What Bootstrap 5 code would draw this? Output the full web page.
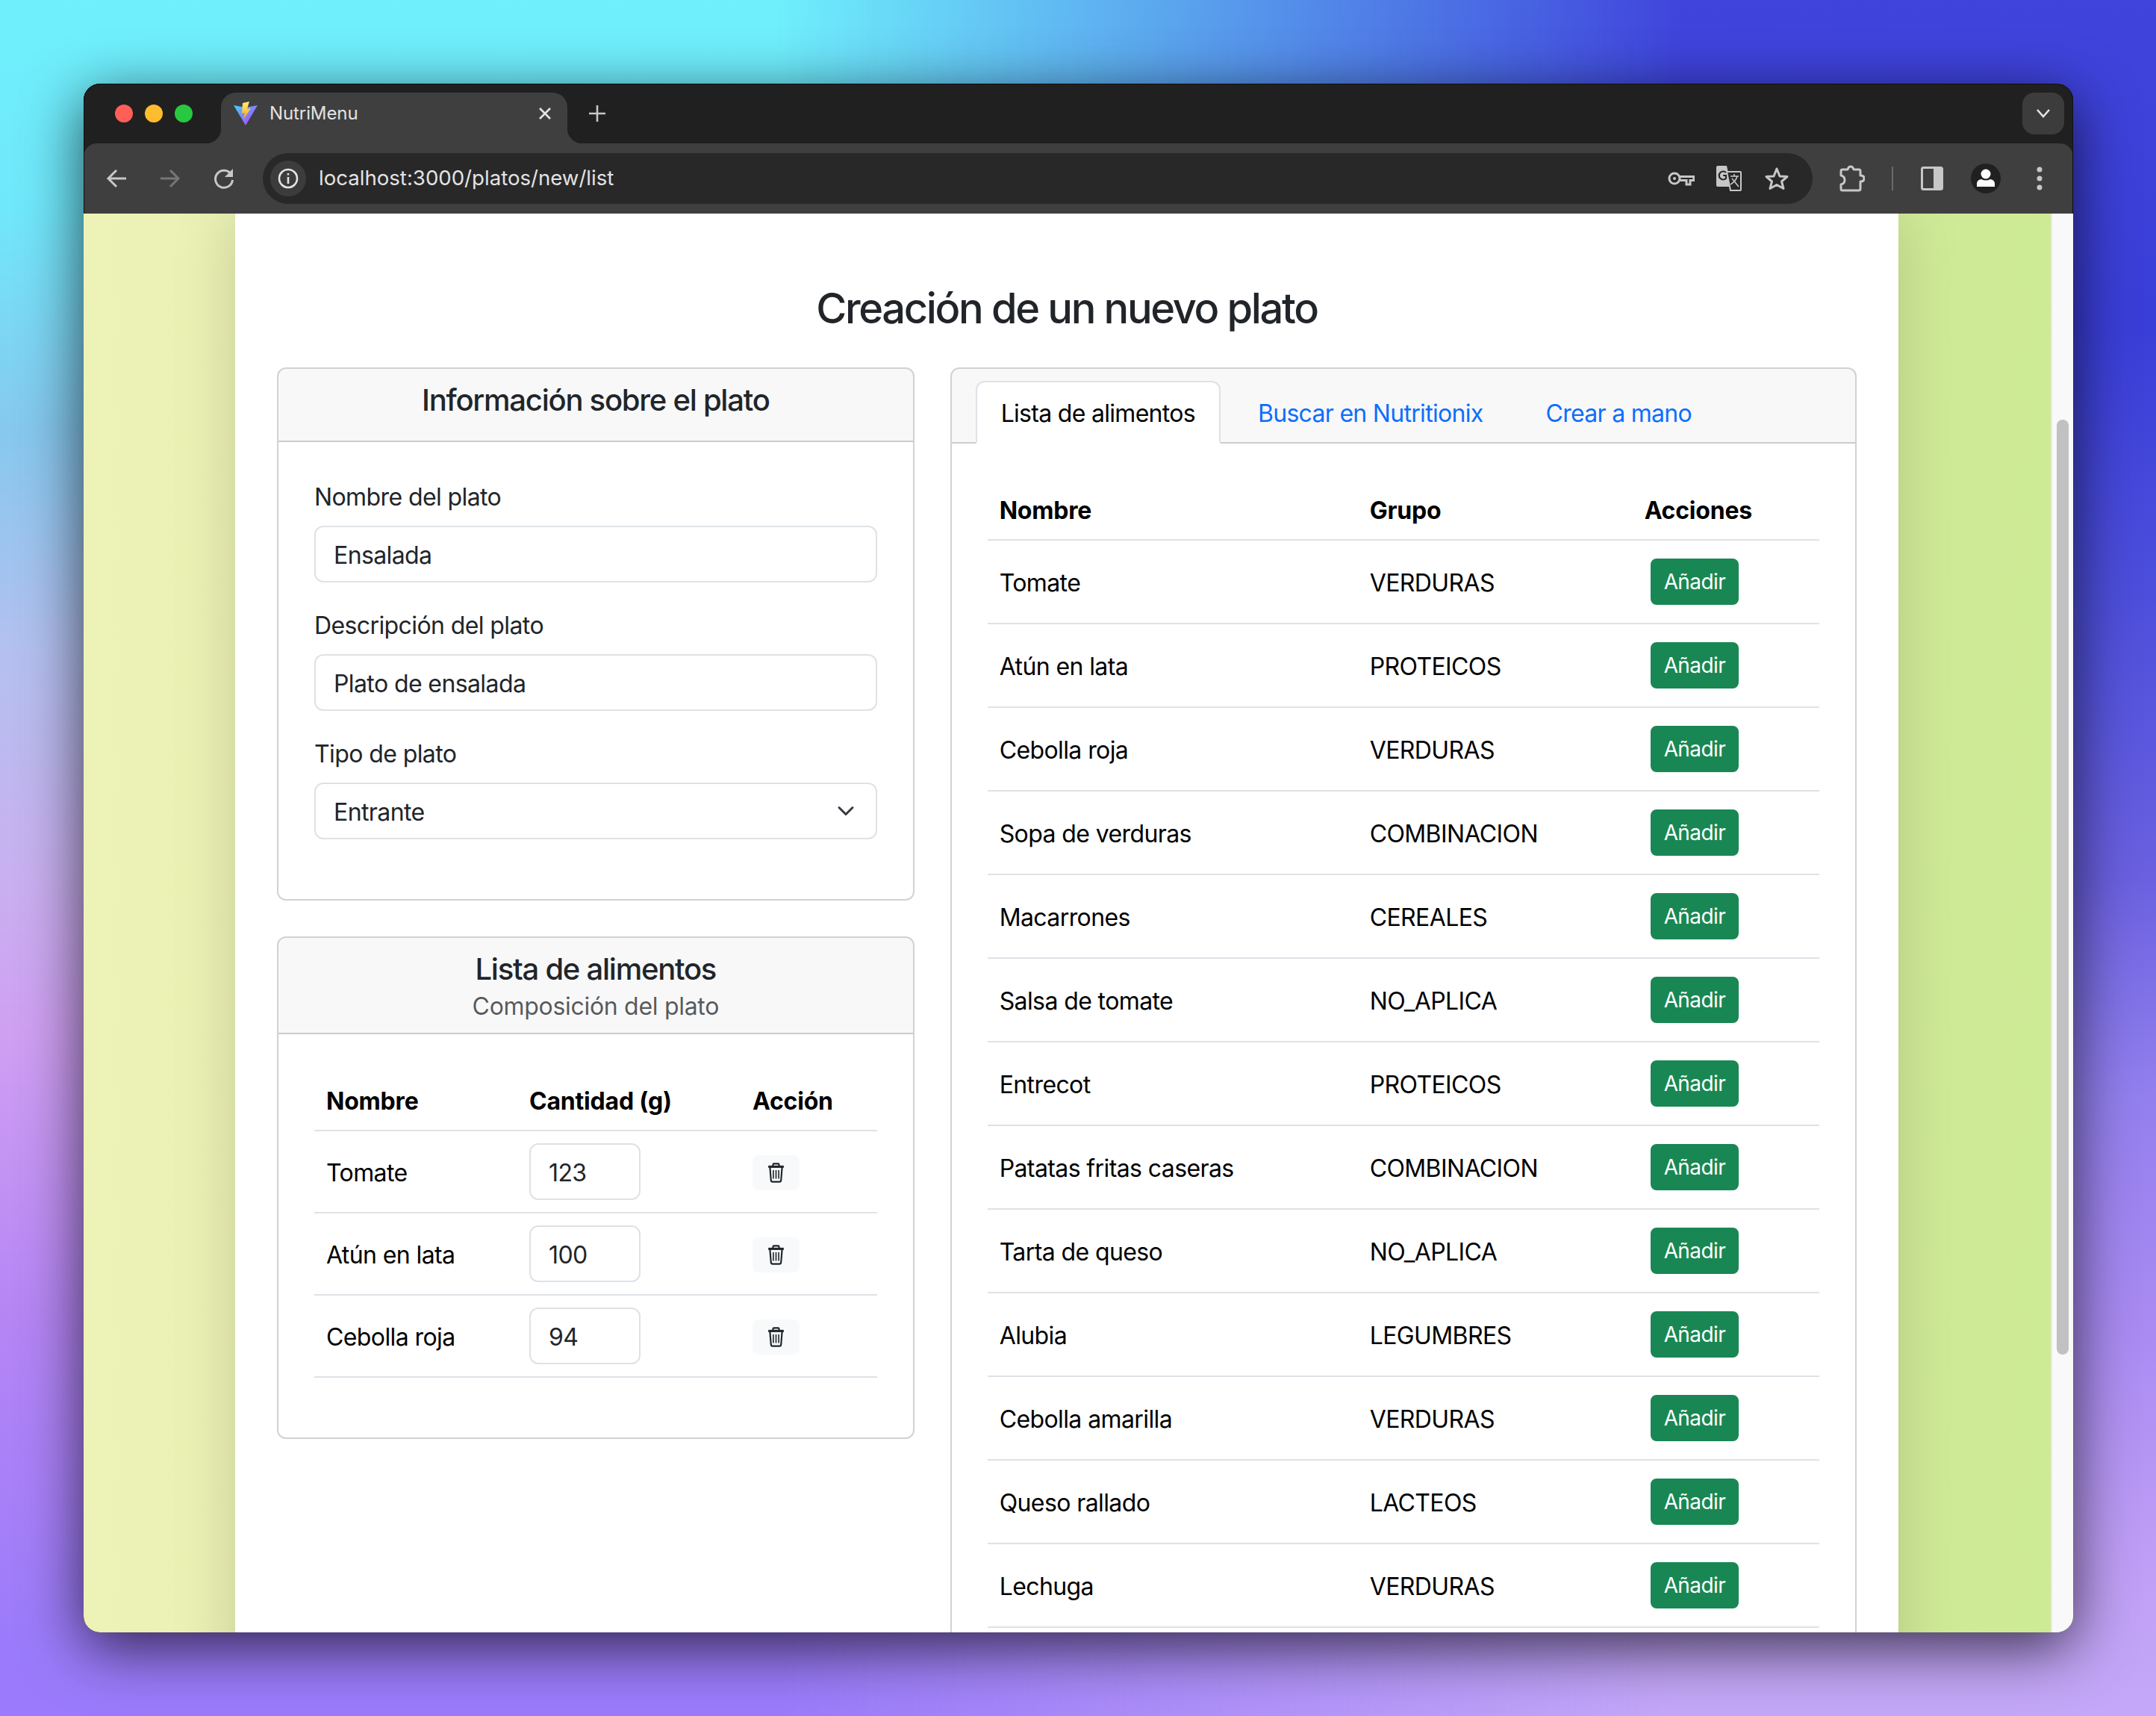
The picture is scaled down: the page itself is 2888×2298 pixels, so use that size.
<!DOCTYPE html>
<html lang="es">
<head>
    <meta charset="UTF-8" />
    <meta name="viewport" content="width=device-width, initial-scale=1.0" />
    <title>NutriMenu</title>
    <link href="https://cdn.jsdelivr.net/npm/bootstrap@5.3.0/dist/css/bootstrap.min.css" rel="stylesheet">
    <style>
        /* the shot is 2x, so double the rem and the hairlines */
        html { font-size: 32px; }
        :root {
            --bs-border-width: 2px;
            --bs-body-font-family: Inter, "Liberation Sans", sans-serif;
        }
        body {
            width: 2888px;
            height: 2298px;
            overflow: hidden;
            padding: 112px 0 0 112px;
            letter-spacing: -.6px;
            background: linear-gradient(180deg, #6ff0fc 0, #70e8fb 12%, #86c8ee 25%, #b4c0f0 38%, #c9b0f0 51%, #cfa0f2 60%, #b585f5 77%, #9b7bfb 96%);
        }
        /* right half of the wallpaper, faded in over the left half */
        body::before {
            content: "";
            position: absolute;
            inset: 0;
            z-index: -1;
            background: linear-gradient(180deg, #4044dc 0, #3a3ed8 19%, #4d4fdc 35%, #6a60e0 51%, #9380ee 64%, #a98af2 77%, #c0a0f6 92%, #c4a8f8 100%);
            -webkit-mask-image: linear-gradient(90deg, transparent 36%, #000 78%);
            mask-image: linear-gradient(90deg, transparent 36%, #000 78%);
        }
        .browser-win {
            width: 2665px;
            height: 2074px;
            border-radius: 22px;
            overflow: hidden;
            background: #202020;
            outline: 1px solid #111;
            outline-offset: -1px;
            box-shadow: 0 20px 80px rgba(0,0,0,.7);
            letter-spacing: 0;
        }
        .tab-strip { height: 80px; padding-top: 11px; background: #202020; border-top: 1px solid #666; }
        .win-dots { width: 184px; padding-left: 42px; padding-bottom: 12px; gap: 16px; }
        .win-dot { width: 24px; height: 24px; border-radius: 50%; }
        .tab-item {
            position: relative;
            width: 464px;
            height: 68px;
            padding: 0 20px 12px 17px;
            background: #3f3f3f;
            border-radius: 20px 20px 0 0;
            color: #e3e3e3;
            font-size: 24px;
            letter-spacing: -.1px;
        }
        .tab-item::before, .tab-item::after {
            content: "";
            position: absolute;
            bottom: 0;
            width: 20px;
            height: 20px;
        }
        .tab-item::before { left: -20px; background: radial-gradient(circle at 0 0, transparent 20px, #3f3f3f 20.5px); }
        .tab-item::after { right: -20px; background: radial-gradient(circle at 100% 0, transparent 20px, #3f3f3f 20.5px); }
        .tab-name { flex: 1; margin-left: 16px; }
        .tab-new { width: 80px; margin-left: 0; padding-bottom: 12px; }
        .tab-search {
            width: 56px;
            height: 56px;
            margin: 0 12px 12px auto;
            border-radius: 16px;
            background: #3c3c3c;
        }
        .tool-bar {
            height: 94px;
            padding: 0 9px 0 8px;
            background: #3f3f3f;
            border-radius: 18px 18px 0 0;
            color: #c7c7c7;
        }
        .tool-btn { width: 72px; height: 72px; flex: none; }
        .omni-box {
            flex: 1;
            height: 68px;
            margin: 0 17px 0 16px;
            padding: 0 16px 0 10px;
            border-radius: 34px;
            background: #282828;
        }
        .omni-info { width: 48px; height: 48px; border-radius: 50%; background: #3c3c3c; }
        .omni-url { flex: 1; margin-left: 17px; color: #e3e3e3; font-size: 27.6px; }
        .omni-icon { width: 64px; height: 64px; flex: none; }
        .tool-sep { width: 2px; height: 32px; margin: 0 16px 0 17px; background: #6a6a6a; }
        .page-view {
            position: relative;
            height: 1900px;
            overflow: hidden;
            background: linear-gradient(90deg, #edf2b6, #cdea95);
            letter-spacing: -.6px;
        }
        .scroll-track {
            position: absolute;
            top: 0;
            right: 0;
            width: 30px;
            height: 100%;
            background: #f9f9f9;
            border-left: 2px solid #e8e8e8;
        }
        .scroll-thumb {
            position: absolute;
            top: 276px;
            left: 6px;
            width: 16px;
            height: 1252px;
            border-radius: 8px;
            background: #c1c1c1;
        }
        .page-sheet {
            width: 2228px;
            margin-left: 203px;
            min-height: 100%;
            padding: 94px 32px 0;
            background: #fff;
            box-shadow: 0 0 80px rgba(0,0,0,.16);
        }
        .page-title { margin-bottom: 45px; letter-spacing: -2.35px; }
        .box-title { padding-top: 2px; letter-spacing: -1.25px; }
        h5.box-title { margin-bottom: 14px; }
        .box-head-sub { padding-bottom: 11px; }
        h5.box-title.mb-0 { margin-bottom: 0; }
        .box-sub { margin-top: 2px; letter-spacing: -.3px; }
        /* Inter sits a little higher in its line box than the original font */
        .form-label { padding-top: 2px; margin-bottom: 14px; }
        .form-control, .form-select { padding-top: 14px; padding-bottom: 10px; }
        .form-control, .form-select, .btn { letter-spacing: inherit; }
        .form-select { background-size: 32px 24px; }
        .nav-tabs { --bs-nav-tabs-link-active-color: #000; letter-spacing: -.7px; }
        .nav-tabs .nav-link { padding-top: 18px; padding-bottom: 14px; }
        .table { --bs-table-color: #000; table-layout: fixed; }
        .table th { padding-top: 18px; padding-bottom: 14px; letter-spacing: -.2px; }
        .table td.text-cell { padding-top: 18px; padding-bottom: 14px; }
        .col-name { width: 272px; }
        .col-qty { width: 299px; }
        .qty-input { width: 149px; }
        .col-food { width: 496px; }
        .col-group { width: 368px; }
        .trash-icon { display: block; }
    </style>
</head>
<body>
    <div class="browser-win">
        <div class="tab-strip d-flex">
            <div class="win-dots d-flex align-items-center">
                <span class="win-dot" style="background:#ff5f57"></span>
                <span class="win-dot" style="background:#febc2e"></span>
                <span class="win-dot" style="background:#28c840"></span>
            </div>
            <div class="tab-item d-flex align-items-center">
                <svg width="32" height="32" viewBox="0 0 32 32">
                    <defs>
                        <linearGradient id="viteA" x1="0" y1="0" x2="1" y2="1"><stop offset="0" stop-color="#41d1ff"/><stop offset="1" stop-color="#bd34fe"/></linearGradient>
                        <linearGradient id="viteB" x1="0" y1="0" x2="0" y2="1"><stop offset="0" stop-color="#ffea83"/><stop offset="1" stop-color="#ffa800"/></linearGradient>
                    </defs>
                    <path fill="url(#viteA)" d="M0 5 L16 8 L32 5 L16 32 Z"/>
                    <path fill="url(#viteB)" d="M21 0 L12 2 L11 16 L15 15 L13 24 L23 9 L18 10 Z"/>
                </svg>
                <span class="tab-name">NutriMenu</span>
                <svg width="20" height="20" viewBox="0 0 20 20" fill="none" stroke="#e3e3e3" stroke-width="2.6"><path d="M3 3 L17 17 M17 3 L3 17"/></svg>
            </div>
            <div class="tab-new d-flex align-items-center justify-content-center">
                <svg width="24" height="24" viewBox="0 0 24 24" fill="none" stroke="#c7c7c7" stroke-width="2.6"><path d="M12 1 V23 M1 12 H23"/></svg>
            </div>
            <div class="tab-search d-flex align-items-center justify-content-center">
                <svg width="20" height="14" viewBox="0 0 20 14" fill="none" stroke="#e3e3e3" stroke-width="2.6"><path d="M2 2 L10 11 L18 2"/></svg>
            </div>
        </div>
        <div class="tool-bar d-flex align-items-center">
            <div class="tool-btn d-flex align-items-center justify-content-center">
                <svg width="28" height="28" viewBox="0 0 28 28" fill="none" stroke="#c7c7c7" stroke-width="3"><path d="M27 14 H3 M14 3 L3 14 L14 25"/></svg>
            </div>
            <div class="tool-btn d-flex align-items-center justify-content-center">
                <svg width="28" height="28" viewBox="0 0 28 28" fill="none" stroke="#767676" stroke-width="3"><path d="M1 14 H25 M14 3 L25 14 L14 25"/></svg>
            </div>
            <div class="tool-btn d-flex align-items-center justify-content-center">
                <svg width="28" height="28" viewBox="0 0 28 28" fill="none" stroke="#c7c7c7" stroke-width="3"><path d="M24 9 A11.5 11.5 0 1 0 25.5 16"/><path fill="#c7c7c7" stroke="none" d="M26 1 V12 H15 Z"/></svg>
            </div>
            <div class="omni-box d-flex align-items-center">
                <div class="omni-info d-flex align-items-center justify-content-center">
                    <svg width="28" height="28" viewBox="0 0 28 28" fill="none" stroke="#e3e3e3" stroke-width="2.6"><circle cx="14" cy="14" r="12"/><path d="M14 12 V21"/><path d="M14 7 V9.6"/></svg>
                </div>
                <span class="omni-url">localhost:3000/platos/new/list</span>
                <div class="omni-icon d-flex align-items-center justify-content-center">
                    <svg width="36" height="20" viewBox="0 0 36 20" fill="none" stroke="#c7c7c7" stroke-width="3"><circle cx="9" cy="10" r="7"/><circle cx="9" cy="10" r="2" fill="#c7c7c7" stroke="none"/><path d="M16 7.5 H35 V12.5 H30 V18 H25 V12.5 H16"/></svg>
                </div>
                <div class="omni-icon d-flex align-items-center justify-content-center">
                    <svg width="34" height="34" viewBox="0 0 34 34">
                        <path fill="#c7c7c7" d="M2 0 H14 L20 28 H2 Q0 28 0 26 V2 Q0 0 2 0 Z"/>
                        <path fill="#282828" stroke="#c7c7c7" stroke-width="2" d="M14 8 H32 Q33 8 33 9 V32 Q33 33 32 33 H19 L14 8 Z"/>
                        <path fill="none" stroke="#282828" stroke-width="2.2" d="M13 9 A5.5 5.5 0 1 0 13 17 V13 H9"/>
                        <path fill="none" stroke="#c7c7c7" stroke-width="1.6" d="M19 14 H30 M24 11 V14 M28 14 Q26 21 19 25 M21 17 L30 28"/>
                    </svg>
                </div>
                <div class="omni-icon d-flex align-items-center justify-content-center">
                    <svg width="34" height="32" viewBox="0 0 34 32" fill="none" stroke="#c7c7c7" stroke-width="3" stroke-linejoin="round"><path d="M17 3 L21 13 L31 13.5 L23.5 20 L26 29.5 L17 24.5 L8 29.5 L10.5 20 L3 13.5 L13 13 Z"/></svg>
                </div>
            </div>
            <div class="tool-btn d-flex align-items-center justify-content-center">
                <svg width="34" height="36" viewBox="0 0 34 36" fill="none" stroke="#c7c7c7" stroke-width="3" stroke-linejoin="round"><path d="M4 6 H11 Q12 2 15 2 Q18 2 19 6 H26 Q28 6 28 8 V14 Q33 14 33 18 Q33 22 28 22 V32 Q28 34 26 34 H4 Q2 34 2 32 V26 Q7 25 7 20 Q7 15 2 14 V8 Q2 6 4 6 Z"/></svg>
            </div>
            <div class="tool-sep"></div>
            <div class="tool-btn d-flex align-items-center justify-content-center">
                <svg width="30" height="32" viewBox="0 0 30 32"><rect x="1.5" y="1.5" width="27" height="29" rx="2" fill="none" stroke="#c7c7c7" stroke-width="3"/><rect x="17" y="1.5" width="12" height="29" fill="#c7c7c7"/></svg>
            </div>
            <div class="tool-btn d-flex align-items-center justify-content-center">
                <svg width="40" height="40" viewBox="0 0 40 40"><circle cx="20" cy="20" r="20" fill="#202020"/><circle cx="20" cy="14" r="6.5" fill="#fff"/><path fill="#fff" d="M8 31 V27 Q8 22 14 21 Q20 24 26 21 Q32 22 32 27 V31 Z"/></svg>
            </div>
            <div class="tool-btn d-flex align-items-center justify-content-center">
                <svg width="8" height="32" viewBox="0 0 8 32" fill="#c7c7c7"><circle cx="4" cy="4" r="3.5"/><circle cx="4" cy="16" r="3.5"/><circle cx="4" cy="28" r="3.5"/></svg>
            </div>
        </div>
        <div class="page-view">
            <div class="page-sheet">
                <h3 class="page-title text-center">Creación de un nuevo plato</h3>
                <div class="row mx-0">
                    <div class="col-5">
                        <div class="card">
                            <div class="card-header text-center">
                                <h5 class="box-title">Información sobre el plato</h5>
                            </div>
                            <div class="card-body p-4">
                                <div class="mb-3">
                                    <label class="form-label" for="dishName">Nombre del plato</label>
                                    <input id="dishName" class="form-control" type="text" value="Ensalada">
                                </div>
                                <div class="mb-3">
                                    <label class="form-label" for="dishDesc">Descripción del plato</label>
                                    <input id="dishDesc" class="form-control" type="text" value="Plato de ensalada">
                                </div>
                                <div class="mb-3">
                                    <label class="form-label" for="dishType">Tipo de plato</label>
                                    <select id="dishType" class="form-select">
                                        <option>Entrante</option>
                                    </select>
                                </div>
                            </div>
                        </div>
                        <div class="card mt-4">
                            <div class="card-header box-head-sub text-center">
                                <h5 class="box-title mb-0">Lista de alimentos</h5>
                                <div class="box-sub text-body-secondary">Composición del plato</div>
                            </div>
                            <div class="card-body p-4">
                                <table class="table align-middle">
                                    <thead>
                                        <tr><th class="col-name">Nombre</th><th class="col-qty">Cantidad (g)</th><th>Acción</th></tr>
                                    </thead>
                                    <tbody id="dishRows"></tbody>
                                </table>
                            </div>
                        </div>
                    </div>
                    <div class="col-7">
                        <div class="card">
                            <div class="card-header">
                                <ul class="nav nav-tabs card-header-tabs mx-0 gap-2">
                                    <li class="nav-item"><a class="nav-link active" href="#">Lista de alimentos</a></li>
                                    <li class="nav-item"><a class="nav-link" href="#">Buscar en Nutritionix</a></li>
                                    <li class="nav-item"><a class="nav-link" href="#">Crear a mano</a></li>
                                </ul>
                            </div>
                            <div class="card-body p-4">
                                <table class="table align-middle">
                                    <thead>
                                        <tr><th class="col-food">Nombre</th><th class="col-group">Grupo</th><th>Acciones</th></tr>
                                    </thead>
                                    <tbody id="foodRows"></tbody>
                                </table>
                            </div>
                        </div>
                    </div>
                </div>
            </div>
            <div class="scroll-track"><div class="scroll-thumb"></div></div>
        </div>
    </div>
    <script src="https://cdn.jsdelivr.net/npm/bootstrap@5.3.0/dist/js/bootstrap.bundle.min.js"></script>
    <script>
        const dish = [["Tomate", 123], ["Atún en lata", 100], ["Cebolla roja", 94]];
        const foods = [
            ["Tomate", "VERDURAS"], ["Atún en lata", "PROTEICOS"], ["Cebolla roja", "VERDURAS"],
            ["Sopa de verduras", "COMBINACION"], ["Macarrones", "CEREALES"], ["Salsa de tomate", "NO_APLICA"],
            ["Entrecot", "PROTEICOS"], ["Patatas fritas caseras", "COMBINACION"], ["Tarta de queso", "NO_APLICA"],
            ["Alubia", "LEGUMBRES"], ["Cebolla amarilla", "VERDURAS"], ["Queso rallado", "LACTEOS"], ["Lechuga", "VERDURAS"]
        ];
        const trash = `<svg class="trash-icon" width="27" height="27" viewBox="0 0 27 30" fill="none" stroke="#212529" stroke-width="2.4"><path d="M9 5 V3 Q9 1.5 10.5 1.5 H16.5 Q18 1.5 18 3 V5"/><path stroke-width="3.4" d="M2 6 H25"/><path d="M4.5 7 L6 26 Q6.2 28.5 8.5 28.5 H18.5 Q20.8 28.5 21 26 L22.5 7"/><path stroke-width="1.8" d="M9.5 11 V24 M13.5 11 V24 M17.5 11 V24"/></svg>`;
        document.getElementById("dishRows").innerHTML = dish.map(d => `
            <tr>
                <td class="text-cell">${d[0]}</td>
                <td><input class="form-control qty-input" type="number" value="${d[1]}"></td>
                <td><button class="btn btn-light btn-sm" type="button">${trash}</button></td>
            </tr>`).join("");
        document.getElementById("foodRows").innerHTML = foods.map(f => `
            <tr>
                <td class="text-cell">${f[0]}</td>
                <td class="text-cell">${f[1]}</td>
                <td><button class="btn btn-success btn-sm m-1" type="button">Añadir</button></td>
            </tr>`).join("");
    </script>
</body>
</html>
